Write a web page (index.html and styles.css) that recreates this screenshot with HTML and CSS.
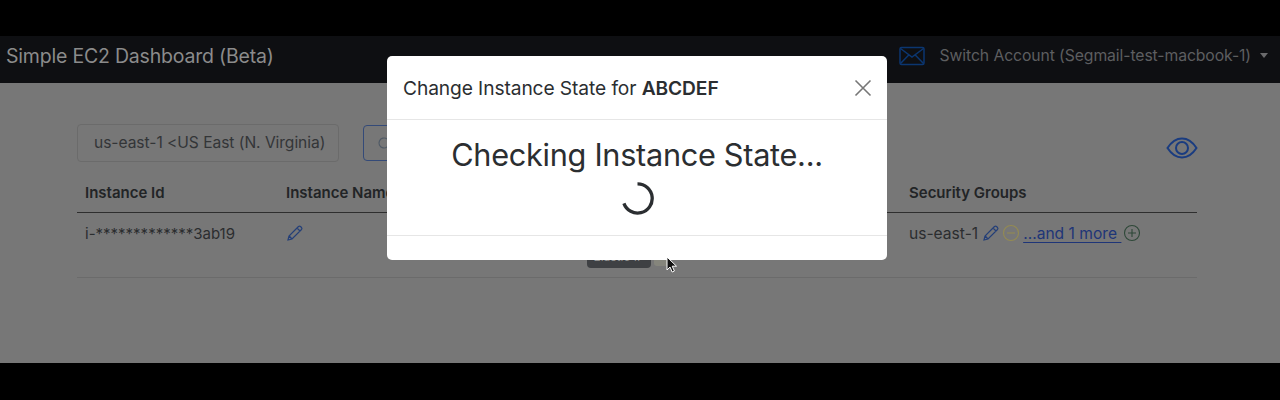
FILE: index.html
```html
<!DOCTYPE html>
<html lang="en">
<head>
    <meta charset="UTF-8">
    <title>Simple EC2 Dashboard (Beta)</title>
    <link rel="stylesheet" href="styles.css">
</head>
<body>

<div class="screen">
    <header class="navbar">
        <span class="brand">Simple EC2 Dashboard (Beta)</span>
        <div class="account">
            <svg class="mail-icon" viewBox="0 0 26 20" fill="none" stroke="#0b3670" stroke-width="1.5">
                <rect x="1" y="1.5" width="24" height="17" rx="1.5"/>
                <path d="M1.5 2.5 13 11 24.5 2.5M1.5 17.5 10 8.8M24.5 17.5 16 8.8"/>
            </svg>
            <span class="account-name">Switch Account (Segmail-test-macbook-1)</span>
            <span class="caret"></span>
        </div>
    </header>

    <main class="content">
        <div class="toolbar">
            <div class="region-select">us-east-1 &lt;US East (N. Virginia)</div>
            <div class="refresh-btn">
                <svg viewBox="0 0 16 16" fill="none" stroke="#505a66" stroke-width="1.2"><path d="M13 8a5 5 0 1 1-2-4"/></svg>
            </div>
            <svg class="eye-icon" viewBox="0 0 32 24" fill="none" stroke="#1a3c80" stroke-width="2">
                <path d="M1.5 12C6 5 11 2.5 16 2.5S26 5 30.5 12C26 19 21 21.5 16 21.5S6 19 1.5 12Z"/>
                <circle cx="16" cy="12" r="6"/>
            </svg>
        </div>

        <div class="table-head">
            <div class="col-id">Instance Id</div>
            <div class="col-name">Instance Name</div>
            <div class="col-groups">Security Groups</div>
        </div>

        <div class="table-row">
            <div class="col-id">i-*************3ab19</div>
            <div class="col-name">
                <svg class="pencil" viewBox="0 0 18 18" fill="none" stroke="#243f78" stroke-width="1.2"><path d="M2 16l1-4L12.5 2.5a1.5 1.5 0 0 1 2 0l1 1a1.5 1.5 0 0 1 0 2L6 15l-4 1ZM11 4l3 3M3.2 12 6 15"/></svg>
            </div>
            <div class="elastic-btn">Elastic IP</div>
            <div class="stop-btn"></div>
            <div class="col-groups group-cell">
                <span>us-east-1</span>
                <svg class="pencil" viewBox="0 0 18 18" fill="none" stroke="#243f78" stroke-width="1.2"><path d="M2 16l1-4L12.5 2.5a1.5 1.5 0 0 1 2 0l1 1a1.5 1.5 0 0 1 0 2L6 15l-4 1ZM11 4l3 3M3.2 12 6 15"/></svg>
                <svg class="round-icon minus" viewBox="0 0 18 18" fill="none" stroke="#948b52" stroke-width="1.1"><circle cx="9" cy="9" r="7.5"/><path d="M5 9h8"/></svg>
                <span class="more-link">...and 1 more </span>
                <svg class="round-icon plus" viewBox="0 0 18 18" fill="none" stroke="#2e4838" stroke-width="1.1"><circle cx="9" cy="9" r="7.5"/><path d="M5 9h8M9 5v8"/></svg>
            </div>
        </div>
    </main>

    <div class="modal">
        <div class="modal-header">
            <span class="modal-title">Change Instance State for <b>ABCDEF</b></span>
            <svg class="close-icon" viewBox="0 0 18 18" fill="none" stroke="#777" stroke-width="1.6"><path d="M1.5 1.5l15 15M16.5 1.5l-15 15"/></svg>
        </div>
        <div class="modal-body">
            <h2>Checking Instance State...</h2>
            <svg class="spinner" viewBox="0 0 34 34" fill="none" stroke="#2b2e31" stroke-width="3.4"><path d="M17 2a15 15 0 1 1-14 20"/></svg>
        </div>
        <div class="modal-footer"></div>
    </div>

    <svg class="cursor" viewBox="0 0 12 18"><path d="M1 1v13l3-3 2.2 5 2.2-1-2.2-4.8h4.3Z" fill="#111" stroke="#fff" stroke-width="1"/></svg>
</div>

</body>
</html>
```
FILE: styles.css
```css
html, body {
    margin: 0;
    padding: 0;
    background-color: #000;
    overflow: hidden;
}
body {
    height: 400px;
    padding-top: 36px;
    box-sizing: border-box;
    font-family: Inter, "Liberation Sans", sans-serif;
}
.screen {
    position: relative;
    height: 327px;
    background-color: #777;
    color: #2b2d2f;
}

/* top bar */
.navbar {
    height: 47px;
    box-sizing: border-box;
    background-color: #0e0f12;
    display: flex;
    align-items: center;
    justify-content: space-between;
    padding: 0 12px 8px 6px;
}
.brand {
    font-size: 19.5px;
    letter-spacing: -0.2px;
    color: #8b8b8b;
}
.account {
    display: flex;
    align-items: center;
    color: #5d5e60;
    font-size: 15.75px;
    letter-spacing: -0.1px;
}
.mail-icon {
    width: 26px;
    height: 20px;
    margin-right: 15px;
}
.caret {
    margin-left: 9px;
    border-top: 5px solid #6a6a6c;
    border-left: 4.5px solid transparent;
    border-right: 4.5px solid transparent;
}

/* page content */
.content {
    padding: 41px 83px 0 77px;
}
.toolbar {
    display: flex;
    align-items: center;
    height: 38px;
}
.region-select {
    width: 244px;
    height: 36px;
    line-height: 36px;
    border: 1px solid #6b6b6b;
    border-radius: 4px;
    padding-left: 16px;
    font-size: 15.6px;
    letter-spacing: -0.05px;
    white-space: nowrap;
    color: #333537;
}
.refresh-btn {
    margin-left: 24px;
    width: 60px;
    height: 36px;
    border: 1px solid #344a78;
    border-radius: 4px;
    display: flex;
    align-items: center;
    padding-left: 12px;
    box-sizing: border-box;
}
.refresh-btn svg {
    width: 16px;
    height: 16px;
}
.eye-icon {
    margin: 10px -1px 0 auto;
    width: 32px;
    height: 24px;
}
.table-head, .table-row {
    display: flex;
    position: relative;
    font-size: 15px;
}
.table-head {
    height: 39px;
    margin-top: 11px;
    align-items: center;
    font-weight: 600;
    border-bottom: 1px solid #2e2e2e;
    color: #222426;
}
.table-row {
    height: 65px;
    padding-top: 11px;
    box-sizing: border-box;
    border-bottom: 1px solid #6b6b6b;
    color: #2b2d2f;
}
.col-id {
    width: 209px;
    padding-left: 8px;
    box-sizing: border-box;
}
.col-name {
    width: 623px;
}
.col-groups {
    flex: 1;
    white-space: nowrap;
}
.pencil {
    width: 18px;
    height: 18px;
    vertical-align: -3px;
}
.group-cell {
    display: flex;
    align-items: center;
    height: 18px;
    font-size: 15.6px;
}
.group-cell .pencil {
    margin-left: 4px;
}
.round-icon {
    width: 18px;
    height: 18px;
}
.minus {
    margin-left: 2px;
}
.more-link {
    margin-left: 3px;
    color: #1e3578;
    text-decoration: underline;
    text-underline-offset: 3px;
    white-space: pre;
}
.plus {
    margin-left: 2px;
}
.elastic-btn {
    position: absolute;
    left: 510px;
    top: 32px;
    width: 64px;
    height: 23px;
    line-height: 23px;
    background-color: #3e4043;
    border-radius: 4px;
    color: #8f8f8f;
    font-size: 12px;
    text-align: center;
}
.stop-btn {
    position: absolute;
    left: 577px;
    top: 32px;
    width: 14px;
    height: 21px;
    background-color: #85857c;
    border-radius: 3px;
}

/* modal over the page */
.modal {
    position: absolute;
    left: 387px;
    top: 20px;
    width: 500px;
    height: 204px;
    background-color: #fff;
    border-radius: 5px;
    display: flex;
    flex-direction: column;
}
.modal-header {
    height: 64px;
    flex-shrink: 0;
    display: flex;
    align-items: center;
    justify-content: space-between;
    padding: 0 15px 0 16px;
    box-sizing: border-box;
    border-bottom: 1px solid #e6e6e6;
}
.modal-title {
    font-size: 19.2px;
    letter-spacing: -0.1px;
    color: #2b2e31;
}
.modal-title b {
    font-weight: 600;
}
.close-icon {
    width: 18px;
    height: 18px;
}
.modal-body {
    height: 116px;
    box-sizing: border-box;
    flex-shrink: 0;
    border-bottom: 1px solid #e6e6e6;
    display: flex;
    flex-direction: column;
    align-items: center;
}
.modal-body h2 {
    margin: 15px 0 0;
    font-size: 30.7px;
    font-weight: 400;
    letter-spacing: -0.3px;
    line-height: 40px;
    color: #2b2e31;
}
.spinner {
    margin-top: 7px;
    width: 33px;
    height: 33px;
}
.cursor {
    position: absolute;
    left: 666px;
    top: 220px;
    width: 12px;
    height: 18px;
}
```
